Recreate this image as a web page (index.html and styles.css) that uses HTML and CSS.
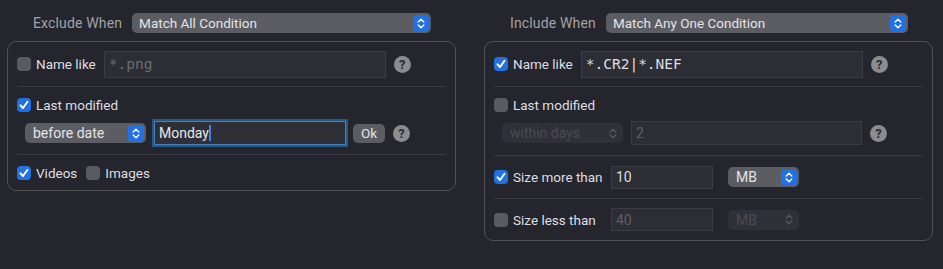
FILE: index.html
```html
<!DOCTYPE html>
<html>
<head>
<meta charset="utf-8">
<link rel="stylesheet" href="styles.css">
</head>
<body>
<div class="page">
  <section class="panel">
    <div class="head">
      <span class="head-label">Exclude When</span>
      <div class="popup wide"><span class="popup-text">Match All Condition</span><span class="stepper"><svg width="8" height="11" viewBox="0 0 8 11"><path d="M1.2 4 L4 1.3 L6.8 4 M1.2 7 L4 9.7 L6.8 7" fill="none" stroke="#fff" stroke-width="1.4" stroke-linecap="round" stroke-linejoin="round"/></svg></span></div>
    </div>
    <div class="box">
      <div class="sec s1">
        <div class="row">
          <span class="cb"></span><span class="lbl">Name like</span>
          <div class="field name mono placeholder">*.png</div>
          <span class="help">?</span>
        </div>
      </div>
      <div class="sep"></div>
      <div class="sec s2">
        <div class="row line1">
          <span class="cb on"><svg width="14" height="14" viewBox="0 0 14 14"><path d="M3.5 7.3 L6 10 L10.5 3.8" fill="none" stroke="#fff" stroke-width="1.9" stroke-linecap="round" stroke-linejoin="round"/></svg></span><span class="lbl">Last modified</span>
        </div>
        <div class="row line2">
          <div class="popup mid"><span class="popup-text">before date</span><span class="stepper"><svg width="8" height="11" viewBox="0 0 8 11"><path d="M1.2 4 L4 1.3 L6.8 4 M1.2 7 L4 9.7 L6.8 7" fill="none" stroke="#fff" stroke-width="1.4" stroke-linecap="round" stroke-linejoin="round"/></svg></span></div>
          <div class="field date focus">Monday<span class="caret"></span></div>
          <span class="btn">Ok</span>
          <span class="help">?</span>
        </div>
      </div>
      <div class="sep"></div>
      <div class="sec s3">
        <div class="row">
          <span class="cb on"><svg width="14" height="14" viewBox="0 0 14 14"><path d="M3.5 7.3 L6 10 L10.5 3.8" fill="none" stroke="#fff" stroke-width="1.9" stroke-linecap="round" stroke-linejoin="round"/></svg></span><span class="lbl">Videos</span>
          <span class="cb second"></span><span class="lbl">Images</span>
        </div>
      </div>
    </div>
  </section>

  <section class="panel">
    <div class="head">
      <span class="head-label">Include When</span>
      <div class="popup wide"><span class="popup-text">Match Any One Condition</span><span class="stepper"><svg width="8" height="11" viewBox="0 0 8 11"><path d="M1.2 4 L4 1.3 L6.8 4 M1.2 7 L4 9.7 L6.8 7" fill="none" stroke="#fff" stroke-width="1.4" stroke-linecap="round" stroke-linejoin="round"/></svg></span></div>
    </div>
    <div class="box">
      <div class="sec s1">
        <div class="row">
          <span class="cb on"><svg width="14" height="14" viewBox="0 0 14 14"><path d="M3.5 7.3 L6 10 L10.5 3.8" fill="none" stroke="#fff" stroke-width="1.9" stroke-linecap="round" stroke-linejoin="round"/></svg></span><span class="lbl">Name like</span>
          <div class="field name mono">*.CR2|*.NEF</div>
          <span class="help">?</span>
        </div>
      </div>
      <div class="sep"></div>
      <div class="sec s2 r">
        <div class="row line1">
          <span class="cb"></span><span class="lbl">Last modified</span>
        </div>
        <div class="row line2">
          <div class="popup mid disabled"><span class="popup-text">within days</span><span class="stepper"><svg width="8" height="11" viewBox="0 0 8 11"><path d="M1.2 4 L4 1.3 L6.8 4 M1.2 7 L4 9.7 L6.8 7" fill="none" stroke="#56565e" stroke-width="1.4" stroke-linecap="round" stroke-linejoin="round"/></svg></span></div>
          <div class="field days dim">2</div>
          <span class="help">?</span>
        </div>
      </div>
      <div class="sep"></div>
      <div class="sec s3r">
        <div class="row">
          <span class="cb on"><svg width="14" height="14" viewBox="0 0 14 14"><path d="M3.5 7.3 L6 10 L10.5 3.8" fill="none" stroke="#fff" stroke-width="1.9" stroke-linecap="round" stroke-linejoin="round"/></svg></span><span class="lbl size-lbl">Size more than</span>
          <div class="field size">10</div>
          <div class="popup unit"><span class="popup-text">MB</span><span class="stepper"><svg width="8" height="11" viewBox="0 0 8 11"><path d="M1.2 4 L4 1.3 L6.8 4 M1.2 7 L4 9.7 L6.8 7" fill="none" stroke="#fff" stroke-width="1.4" stroke-linecap="round" stroke-linejoin="round"/></svg></span></div>
        </div>
      </div>
      <div class="sep"></div>
      <div class="sec s4r">
        <div class="row">
          <span class="cb"></span><span class="lbl size-lbl">Size less than</span>
          <div class="field size dim">40</div>
          <div class="popup unit disabled"><span class="popup-text">MB</span><span class="stepper"><svg width="8" height="11" viewBox="0 0 8 11"><path d="M1.2 4 L4 1.3 L6.8 4 M1.2 7 L4 9.7 L6.8 7" fill="none" stroke="#56565e" stroke-width="1.4" stroke-linecap="round" stroke-linejoin="round"/></svg></span></div>
        </div>
      </div>
    </div>
  </section>
</div>
</body>
</html>
```

FILE: styles.css
```css
* { box-sizing: border-box; }
html, body { margin: 0; padding: 0; }
body {
  background: #25252d;
  width: 943px;
  height: 269px;
  overflow: hidden;
  font-family: "Roboto", "Liberation Sans", sans-serif;
  font-size: 13.5px;
  color: #dedee2;
}
.page {
  display: flex;
  gap: 28px;
  padding-left: 7px;
  padding-top: 13px;
}
.panel { width: 449px; }
.head {
  display: flex;
  align-items: center;
  height: 20px;
  padding: 0 25px 0 26px;
  gap: 10px;
}
.head-label { color: #a2a2a8; font-size: 14px; letter-spacing: 0.15px; }
.popup {
  display: flex;
  align-items: center;
  justify-content: space-between;
  height: 20px;
  background: #5c5c63;
  border-radius: 5px;
  padding: 0 2px 0 8px;
  color: #e4e4e8;
  flex: none;
}
.popup.wide { flex: 1; padding-left: 7px; }
.stepper {
  width: 16px;
  height: 17px;
  border-radius: 4px;
  background: #2270e2;
  display: flex;
  align-items: center;
  justify-content: center;
}
.popup.disabled { background: #303038; color: #4b4b53; }
.popup.disabled .stepper { background: transparent; }
.popup.mid { width: 121px; font-size: 14px; }
.popup.unit { width: 71px; margin-left: 15px; font-size: 14px; }

.box {
  margin-top: 8px;
  border: 1px solid #505057;
  border-radius: 9px;
  padding: 0 9px;
}
.sep { height: 1px; background: #3b3b43; }
.sec { display: flex; flex-direction: column; justify-content: center; }
.s1 { height: 44px; }
.s2 { height: 67px; padding-top: 9px; justify-content: flex-start; gap: 7px; }
.s2.r { height: 68px; }
.s3 { height: 35px; }
.s3r { height: 42px; }
.s4r { height: 41px; }
.row { display: flex; align-items: center; }
.line1 { height: 18px; }
.line2 { height: 24px; padding-left: 8px; }

.cb {
  width: 14px;
  height: 14px;
  border-radius: 4px;
  background: #5a5a61;
  flex: none;
  display: flex;
}
.cb.on { background: #2270e2; }
.cb.second { margin-left: 9px; }
.lbl { margin-left: 5px; }
.size-lbl { width: 98px; }

.field {
  height: 24px;
  background: #2d2d35;
  border: 1px solid #3c3c44;
  display: flex;
  align-items: center;
  padding-left: 4px;
  flex: none;
  font-size: 14px;
}
.field.name { width: 282px; height: 27px; margin-left: 8px; }
.mono { font-family: "DejaVu Sans Mono", "Liberation Mono", monospace; font-size: 14.5px; }
.placeholder { color: #6c6c73; }
.field.date { width: 192px; margin-left: 8px; }
.field.days { width: 231px; margin-left: 8px; }
.field.size { width: 102px; height: 23px; }
.dim { color: #5f5f66; }
.focus {
  border: 1px solid #4a7fb5;
  box-shadow: 0 0 0 2px #235a8c;
  background: #2f2f37;
  color: #e8e8ec;
}
.caret { width: 2px; height: 16px; background: #3b82f0; }
.btn {
  width: 32px;
  height: 19px;
  margin-left: 7px;
  border-radius: 5px;
  background: #5c5c63;
  color: #e4e4e8;
  display: flex;
  align-items: center;
  justify-content: center;
  font-size: 13.5px;
}
.help {
  width: 17px;
  height: 17px;
  border-radius: 50%;
  background: #8b8b90;
  color: #2a2a30;
  font-weight: 700;
  font-size: 13px;
  display: flex;
  align-items: center;
  justify-content: center;
  margin-left: 8px;
  flex: none;
}
```
